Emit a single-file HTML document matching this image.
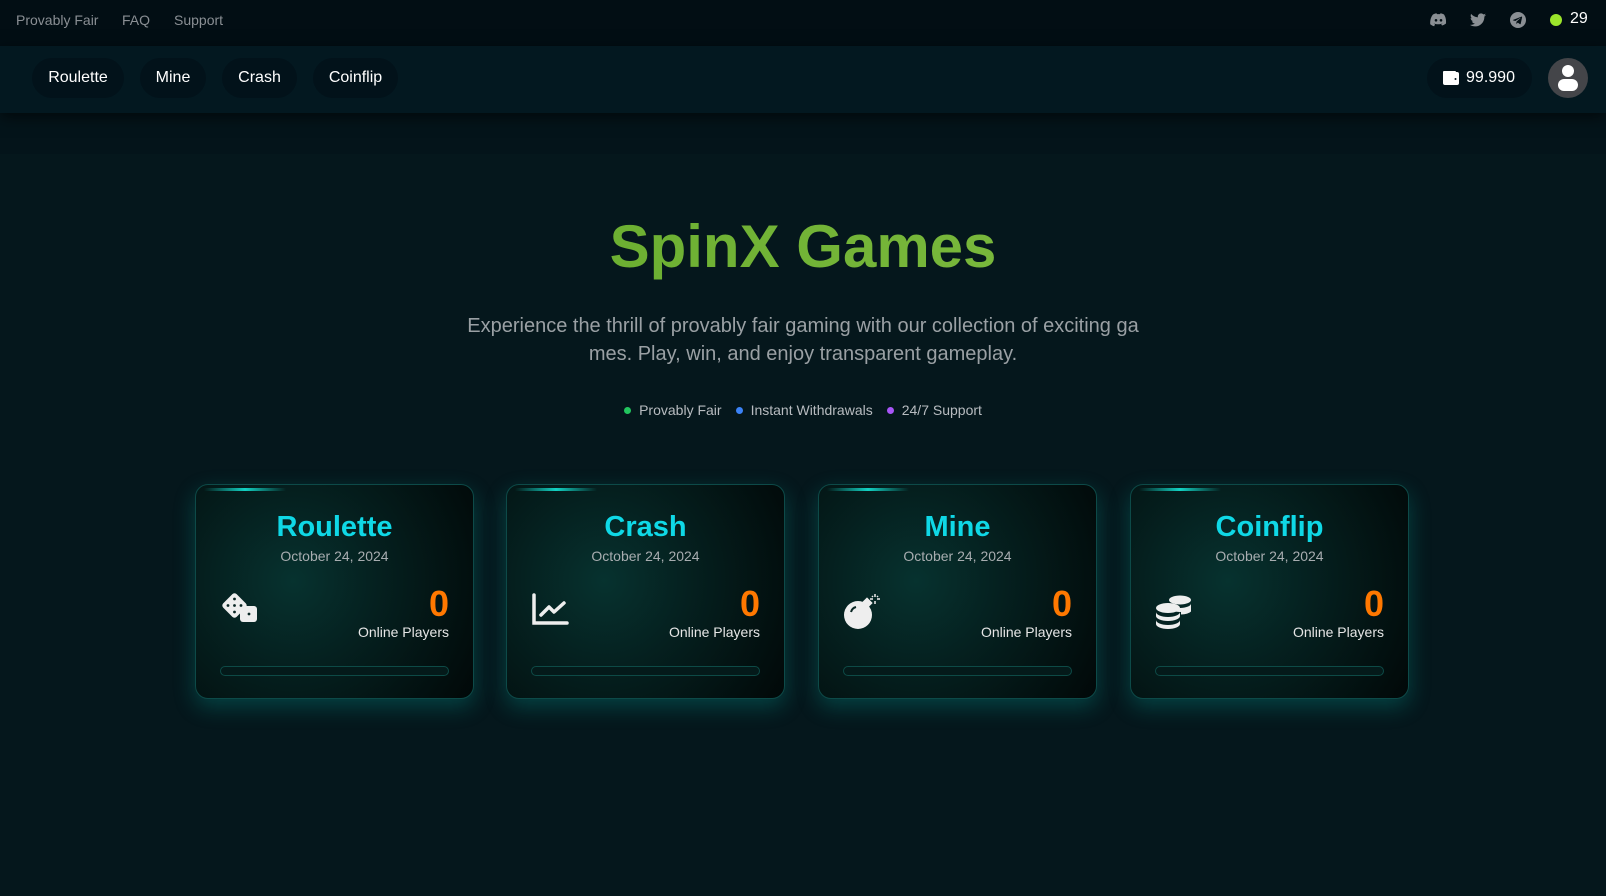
<!DOCTYPE html>
<html><head><meta charset="utf-8"><style>
*{margin:0;padding:0;box-sizing:border-box}
body{width:1606px;height:896px;overflow:hidden;background:#04141a;font-family:"Liberation Sans",Arial,sans-serif;color:#fff;position:relative}
.top{position:absolute;left:0;top:0;width:1606px;height:46px;background:#020e14}
.top a{position:absolute;top:12px;font-size:14px;color:#8a8f94;text-decoration:none}
.nav{position:absolute;left:0;top:46px;width:1606px;height:67px;background:#031820;box-shadow:0 4px 14px rgba(0,0,0,.6)}
.pill{position:absolute;top:12px;height:40px;border-radius:20px;background:#02121a;font-size:16px;line-height:40px;text-align:center;color:#fff}
.main{position:absolute;left:0;top:154px;width:1606px;height:742px;background:#05171c}
h1{position:absolute;top:212px;left:0;width:1606px;text-align:center;font-size:60px;font-weight:bold;background:linear-gradient(90deg,#5aa423,#8bc34a);-webkit-background-clip:text;color:transparent}
.p{position:absolute;top:312px;left:465px;width:676px;text-align:center;font-size:20px;line-height:28px;color:#9aa0a4;word-break:break-all}
.badges{position:absolute;top:402px;left:0;width:1606px;text-align:center;font-size:14px;color:#b8bcc0}
.badges span{margin:0 7px}
.badges i{display:inline-block;width:7px;height:7px;border-radius:50%;margin-right:8px;vertical-align:1px}
.card{position:absolute;top:484px;width:279px;height:215px;border-radius:13px;border:1px solid #0d4a48;background:radial-gradient(circle at 35% 45%,#06322f 0%,#05201f 40%,#010808 100%);box-shadow:0 8px 22px rgba(0,180,170,.28)}
.card:before{content:"";position:absolute;left:8px;top:3px;width:82px;height:3px;background:linear-gradient(90deg,transparent,#12d1c2,transparent)}
.card .t{position:absolute;top:26px;width:100%;text-align:center;font-size:29px;font-weight:bold;color:#0fd8e6}
.card .d{position:absolute;top:63px;width:100%;text-align:center;font-size:14px;color:#a8adb0}
.card .n{position:absolute;top:98px;right:24px;font-size:36px;font-weight:bold;color:#ff7800}
.card .o{position:absolute;top:139px;right:24px;font-size:14px;color:#e6e6e6}
.card .bar{position:absolute;top:181px;left:24px;right:24px;height:10px;border-radius:5px;border:1px solid #0d4a46;background:#041a1a}
.card svg{position:absolute;left:24px;top:108px}
</style></head><body>
<div class="top">
<a style="left:16px">Provably Fair</a><a style="left:122px">FAQ</a><a style="left:174px">Support</a>
<svg style="position:absolute;left:1430px;top:13px" width="17" height="14" viewBox="0 0 17 14"><path fill="#8a8f94" d="M3 1.5C5 .5 6.5.3 6.5.3l.4.8h3.2l.4-.8s1.5.2 3.5 1.2c1.5 2.3 2.3 5 2 9-1.5 1.2-3 1.8-4 2l-.8-1.300c.6-.2 1.2-.5 1.6-.8-2.5 1.2-6.8 1.2-9.4 0 .4.3 1 .6 1.6.8L4.2 13.3c-1-.2-2.5-.8-4-2C0 7 1 3.8 3 1.5z"/><circle cx="6" cy="7.3" r="1.3" fill="#020e14"/><circle cx="11" cy="7.3" r="1.3" fill="#020e14"/></svg>
<svg style="position:absolute;left:1470px;top:13px" width="16" height="14" viewBox="0 0 24 20"><path fill="#8a8f94" d="M24 2.4c-.9.4-1.8.6-2.8.8 1-.6 1.8-1.6 2.2-2.7-1 .6-2 1-3.1 1.2C19.4.7 18.1 0 16.6 0c-2.7 0-4.9 2.2-4.9 4.9 0 .4 0 .8.1 1.1C7.7 5.8 4.1 3.9 1.7.9c-.4.7-.7 1.6-.7 2.5 0 1.7.9 3.2 2.2 4.1-.8 0-1.6-.2-2.2-.6v.1c0 2.4 1.7 4.4 3.9 4.8-.4.1-.8.2-1.3.2-.3 0-.6 0-.9-.1.6 2 2.4 3.4 4.6 3.4-1.700 1.3-3.800 2.100-6.100 2.100H0c2.2 1.4 4.8 2.2 7.5 2.2 9.1 0 14-7.5 14-14v-.6c1-.7 1.8-1.6 2.5-2.6z"/></svg>
<svg style="position:absolute;left:1510px;top:12px" width="16" height="16" viewBox="0 0 16 16"><circle cx="8" cy="8" r="8" fill="#8a8f94"/><path fill="#020e14" d="M3.5 7.8l8-3.2c.4-.1.7.1.6.7l-1.4 6.4c-.1.5-.4.6-.8.4L7.8 10.6l-1 1c-.1.1-.2.2-.5.2l.2-2.2 4-3.6c.2-.2 0-.2-.3-.1L5.3 9 3.2 8.4c-.5-.1-.5-.4.3-.6z"/></svg>
<span style="position:absolute;left:1550px;top:14px;width:12px;height:12px;border-radius:50%;background:#9be52b"></span>
<span style="position:absolute;left:1570px;top:10px;font-size:16px;color:#fff">29</span>
</div>
<div class="nav">
<div class="pill" style="left:32px;width:92px">Roulette</div>
<div class="pill" style="left:140px;width:66px">Mine</div>
<div class="pill" style="left:222px;width:75px">Crash</div>
<div class="pill" style="left:313px;width:85px">Coinflip</div>
<div class="pill" style="left:1427px;width:105px;padding-left:22px">99.990
<svg style="position:absolute;left:16px;top:13px" width="16" height="14" viewBox="0 0 16 14"><rect x="0" y="1" width="16" height="13" rx="2" fill="#fff"/><rect x="0" y="0" width="13" height="3" rx="1" fill="#fff"/><circle cx="12.5" cy="8" r="1" fill="#02121a"/></svg></div>
<div style="position:absolute;left:1548px;top:12px;width:40px;height:40px;border-radius:50%;background:#444549;overflow:hidden">
<div style="position:absolute;left:14px;top:7px;width:12px;height:12px;border-radius:50%;background:#fff"></div>
<div style="position:absolute;left:10px;top:21px;width:20px;height:12px;border-radius:6px;background:#fff"></div></div>
</div>
<div class="main"></div>
<h1>SpinX Games</h1>
<div class="p">Experience the thrill of provably fair gaming with our collection of exciting games. Play, win, and enjoy transparent gameplay.</div>
<div class="badges"><span><i style="background:#22c55e"></i>Provably Fair</span><span><i style="background:#3b82f6"></i>Instant Withdrawals</span><span><i style="background:#a855f7"></i>24/7 Support</span></div>

<div class="card" style="left:195px"><div class="t">Roulette</div><div class="d">October 24, 2024</div>
<svg width="38" height="32" viewBox="0 0 38 32"><rect x="5" y="3" width="19" height="19" rx="3" transform="rotate(45 14.5 12.5)" fill="#eee"/><rect x="20" y="13" width="17" height="16" rx="3" fill="#eee"/><g fill="#0a2624"><circle cx="14.5" cy="6" r="1.4"/><circle cx="8" cy="12.5" r="1.4"/><circle cx="14.5" cy="12.5" r="1.4"/><circle cx="21" cy="12.5" r="1.4"/><circle cx="14.5" cy="19" r="1.4"/><circle cx="29" cy="21" r="1.4"/></g></svg>
<div class="n">0</div><div class="o">Online Players</div><div class="bar"></div></div>

<div class="card" style="left:506px"><div class="t">Crash</div><div class="d">October 24, 2024</div>
<svg width="38" height="36" viewBox="0 0 38 36"><path d="M3 2v28h33" stroke="#eee" stroke-width="3.5" fill="none" stroke-linecap="round"/><path d="M10 22l8-8 5 5 10-9" stroke="#eee" stroke-width="3.5" fill="none" stroke-linecap="round" stroke-linejoin="round"/></svg>
<div class="n">0</div><div class="o">Online Players</div><div class="bar"></div></div>

<div class="card" style="left:818px"><div class="t">Mine</div><div class="d">October 24, 2024</div>
<svg width="40" height="38" viewBox="0 0 40 38"><circle cx="15" cy="22" r="14" fill="#eee"/><rect x="20" y="6" width="8" height="8" transform="rotate(45 24 10)" fill="#eee"/><path d="M8 19a7 7 0 0 1 5-5" stroke="#0a2624" stroke-width="2" fill="none"/><g stroke="#eee" stroke-width="1.5"><path d="M32 1v3M32 8v3M27 6h3M34 6h3M29 3l1 1M35 3l-1 1"/></g></svg>
<div class="n">0</div><div class="o">Online Players</div><div class="bar"></div></div>

<div class="card" style="left:1130px"><div class="t">Coinflip</div><div class="d">October 24, 2024</div>
<svg width="40" height="38" viewBox="0 0 40 38"><g fill="#eee"><ellipse cx="25" cy="7" rx="11" ry="4.5"/><path d="M14 10.5a11 4.5 0 0 0 22 0v4a11 4.5 0 0 1-22 0z"/><path d="M26 17.5a11 4.5 0 0 0 10-3v4a11 4.5 0 0 1-10 3z"/><ellipse cx="13" cy="15" rx="12" ry="5"/><path d="M1 19a12 5 0 0 0 24 0v4a12 5 0 0 1-24 0z"/><path d="M1 27a12 5 0 0 0 24 0v4a12 5 0 0 1-24 0z"/></g></svg>
<div class="n">0</div><div class="o">Online Players</div><div class="bar"></div></div>
</body></html>
